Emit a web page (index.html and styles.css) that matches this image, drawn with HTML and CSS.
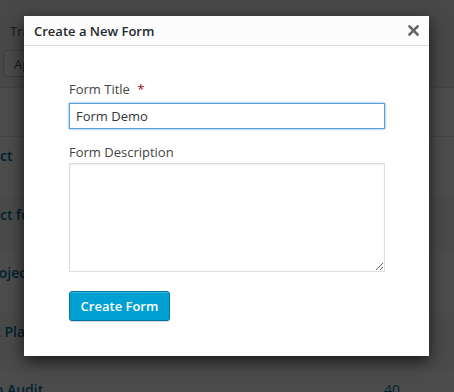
FILE: index.html
```html
<!DOCTYPE html>
<html lang="en">
<head>
    <meta charset="UTF-8">
    <meta name="viewport" content="width=device-width, initial-scale=1.0">
    <title>Forms</title>
    <link rel="stylesheet" href="styles.css">
</head>
<body>
    <!-- page behind the dialog -->
    <div class="page">
        <div class="subsubsub">Trash</div>
        <div class="tablenav">
            <button class="page-btn">Apply</button>
        </div>
        <div class="list">
            <div class="list-head"></div>
            <div class="list-row"><span class="row-title">Contact</span><span class="row-count"></span></div>
            <div class="list-row alt"><span class="row-title">Contact form</span><span class="row-count"></span></div>
            <div class="list-row"><span class="row-title">My Project</span><span class="row-count"></span></div>
            <div class="list-row alt"><span class="row-title">Sprint Plan</span><span class="row-count"></span></div>
            <div class="list-row"><span class="row-title">Studio Audit</span><span class="row-count">40</span></div>
        </div>
    </div>

    <div class="overlay"></div>

    <!-- dialog -->
    <div class="modal">
        <div class="modal-header">
            <span class="modal-title">Create a New Form</span>
            <svg class="modal-close" width="11" height="11" viewBox="0 0 11 11">
                <path d="M1.5 1.5 L9.5 9.5 M9.5 1.5 L1.5 9.5" stroke="#666" stroke-width="2.6" stroke-linecap="square"/>
            </svg>
        </div>
        <div class="modal-body">
            <label class="field-label first" for="form-title">Form Title <span class="required">*</span></label>
            <input type="text" id="form-title" class="field-input" value="Form Demo">

            <label class="field-label second" for="form-desc">Form Description</label>
            <textarea id="form-desc" class="field-textarea"></textarea>

            <button class="create-btn">Create Form</button>
        </div>
    </div>
</body>
</html>
```

FILE: styles.css
```css
* {
    box-sizing: border-box;
    margin: 0;
    padding: 0;
}

body {
    font-family: "Open Sans", "Liberation Sans", sans-serif;
    background-color: #f1f1f1;
    width: 454px;
    height: 392px;
    overflow: hidden;
    position: relative;
}

/* 배경 페이지 */
.subsubsub {
    padding: 21px 0 0 10px;
    font-size: 13px;
    line-height: 20px;
    color: #666;
}

.tablenav {
    padding: 9px 0 0 3px;
    height: 46px;
}

.page-btn {
    height: 27px;
    padding: 0 10px;
    font-family: inherit;
    font-size: 13px;
    color: #555;
    background-color: #f7f7f7;
    border: 1px solid #ccc;
    border-radius: 3px;
}

.list-head {
    height: 50px;
    background-color: #fff;
    border-top: 1px solid #e1e1e1;
    border-bottom: 1px solid #e1e1e1;
}

.list-row {
    height: 58.5px;
    display: flex;
    justify-content: space-between;
    padding: 9px 54px 0 0;
    background-color: #fff;
}

.list-row.alt {
    background-color: #f9f9f9;
}

.row-title {
    margin-left: -40px;
    font-size: 14px;
    line-height: 20px;
    font-weight: 600;
    color: #0073aa;
    white-space: nowrap;
}

.row-count {
    font-size: 14px;
    line-height: 20px;
    color: #0073aa;
}

.overlay {
    position: absolute;
    inset: 0;
    background-color: rgba(0, 0, 0, 0.7);
}

/* 대화상자 */
.modal {
    position: absolute;
    left: 24px;
    top: 16px;
    width: 405px;
    height: 340px;
    background-color: #fff;
    box-shadow: 0 5px 15px rgba(0, 0, 0, 0.7);
}

.modal-header {
    height: 30px;
    display: flex;
    align-items: center;
    justify-content: space-between;
    padding: 0 10px;
    background-color: #fcfcfc;
    border-bottom: 1px solid #ddd;
}

.modal-title {
    font-size: 13px;
    font-weight: 600;
    color: #23282d;
}

.modal-close {
    display: block;
}

.modal-body {
    padding: 0 45px;
}

.field-label {
    display: block;
    font-size: 13px;
    line-height: 20px;
    color: #444;
}

.field-label.first {
    margin-top: 33px;
    margin-bottom: 4px;
}

.field-label.second {
    margin-top: 13px;
    margin-bottom: 1px;
}

.required {
    color: #a00;
    margin-left: 4px;
}

.field-input {
    display: block;
    width: 316px;
    height: 26px;
    padding: 0 6px;
    font-family: inherit;
    font-size: 13px;
    color: #32373c;
    border: 1px solid #5b9dd9;
    box-shadow: 0 0 2px rgba(30, 140, 190, 0.8);
    outline: none;
}

.field-textarea {
    display: block;
    width: 316px;
    height: 109px;
    font-family: inherit;
    font-size: 14px;
    border: 1px solid #ddd;
    box-shadow: inset 0 1px 2px rgba(0, 0, 0, 0.07);
}

.create-btn {
    display: block;
    margin-top: 19px;
    width: 101px;
    height: 30px;
    font-family: inherit;
    font-size: 13px;
    font-weight: 600;
    color: #fff;
    background-color: #00a0d2;
    border: 1px solid #0073aa;
    border-radius: 3px;
    box-shadow: inset 0 1px 0 rgba(120, 200, 230, 0.5), 0 1px 0 rgba(0, 0, 0, 0.15);
    cursor: pointer;
}
```
